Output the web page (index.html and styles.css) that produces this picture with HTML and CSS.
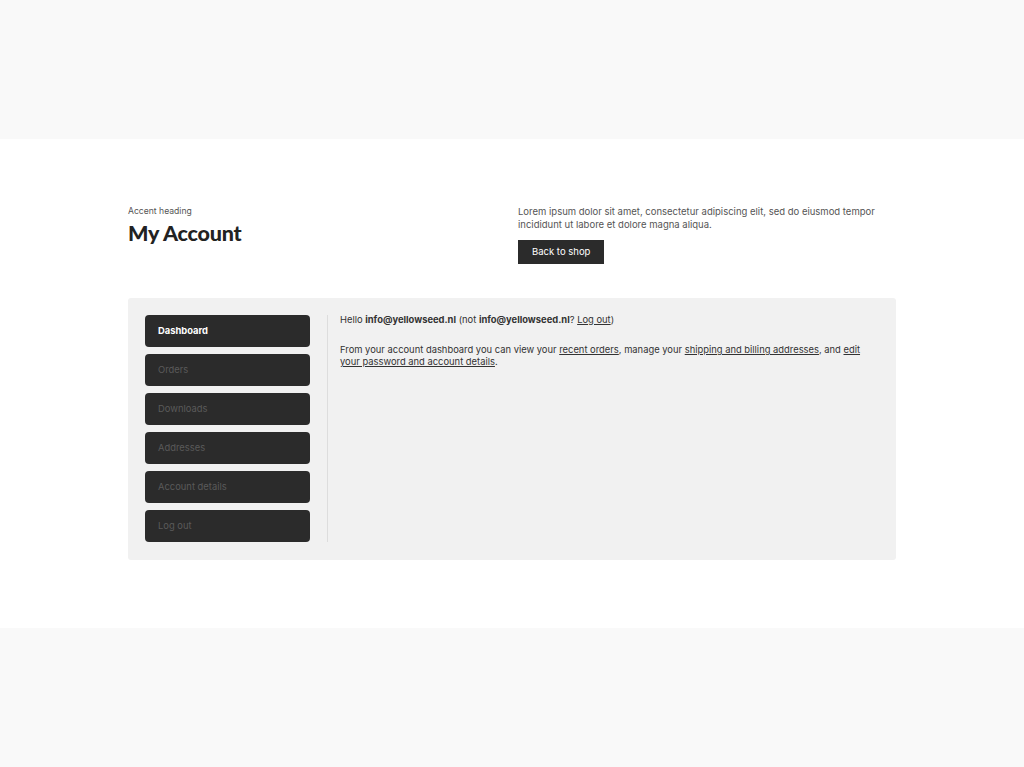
FILE: index.html
```html
<!DOCTYPE html>
<html>
<head>
    <meta charset="utf-8" />
    <title>My Account</title>
    <link rel="stylesheet" href="styles.css">
</head>
<body>
    <div class="band"></div>

    <main class="page">
        <section class="intro">
            <div>
                <p class="accent">Accent heading</p>
                <h1>My Account</h1>
            </div>
            <div>
                <p class="lead">Lorem ipsum dolor sit amet, consectetur adipiscing elit, sed do eiusmod tempor incididunt ut labore et dolore magna aliqua.</p>
                <a class="btn" href="#">Back to shop</a>
            </div>
        </section>

        <section class="account">
            <nav class="account-nav">
                <a class="active" href="#">Dashboard</a>
                <a href="#">Orders</a>
                <a href="#">Downloads</a>
                <a href="#">Addresses</a>
                <a href="#">Account details</a>
                <a href="#">Log out</a>
            </nav>
            <div class="account-content">
                <p>Hello <strong>info@yellowseed.nl</strong> (not <strong>info@yellowseed.nl</strong>? <a href="#">Log out</a>)</p>
                <p>From your account dashboard you can view your <a href="#">recent orders</a>, manage your <a href="#">shipping and billing addresses</a>, and <a href="#">edit your password and account details</a>.</p>
            </div>
        </section>
    </main>

    <div class="band"></div>
</body>
</html>
```

FILE: styles.css
```css
body {
    margin: 0;
    font-family: Inter, "Noto Sans", sans-serif;
    color: #333;
    background: #fff;
}

.band {
    height: 139px;
    background-color: #f9f9f9;
}

.page {
    width: 768px;
    margin: 0 auto;
    padding: 66px 0 68px;
}

.intro {
    display: grid;
    grid-template-columns: 1fr 1fr;
    gap: 12px;
    margin-bottom: 34px;
}

.accent {
    margin: 1px 0 4px;
    font-size: 8.6px;
    color: #555;
}

h1 {
    margin: 0;
    font-family: Lato, sans-serif;
    font-size: 21.5px;
    font-weight: 900;
    color: #222;
    letter-spacing: -0.2px;
}

.lead {
    margin: 0 0 8px;
    font-size: 9.5px;
    line-height: 13px;
    color: #555;
}

.btn {
    display: inline-block;
    padding: 6px 14px;
    font-size: 9.5px;
    line-height: 12px;
    color: #fff;
    background-color: #2b2b2b;
    text-decoration: none;
}

.account {
    display: flex;
    padding: 17px 17px 18px;
    background-color: #f1f1f1;
    border-radius: 3px;
}

.account-nav {
    display: flex;
    flex-direction: column;
    gap: 7px;
    width: 165px;
    padding-right: 17px;
    border-right: 1px solid #ddd;
}

.account-nav a {
    display: block;
    height: 32px;
    line-height: 32px;
    padding: 0 13px;
    font-size: 9.4px;
    color: #5a5a5a;
    background-color: #2b2b2b;
    border-radius: 4px;
    text-decoration: none;
}

.account-nav a.active {
    color: #fff;
    font-weight: 700;
}

.account-content {
    flex: 1;
    margin-top: -1px;
    padding-left: 12px;
    font-size: 9.4px;
    line-height: 12px;
    color: #333;
}

.account-content p {
    margin: 0 0 18px;
}

.account-content a {
    color: #333;
}
```
